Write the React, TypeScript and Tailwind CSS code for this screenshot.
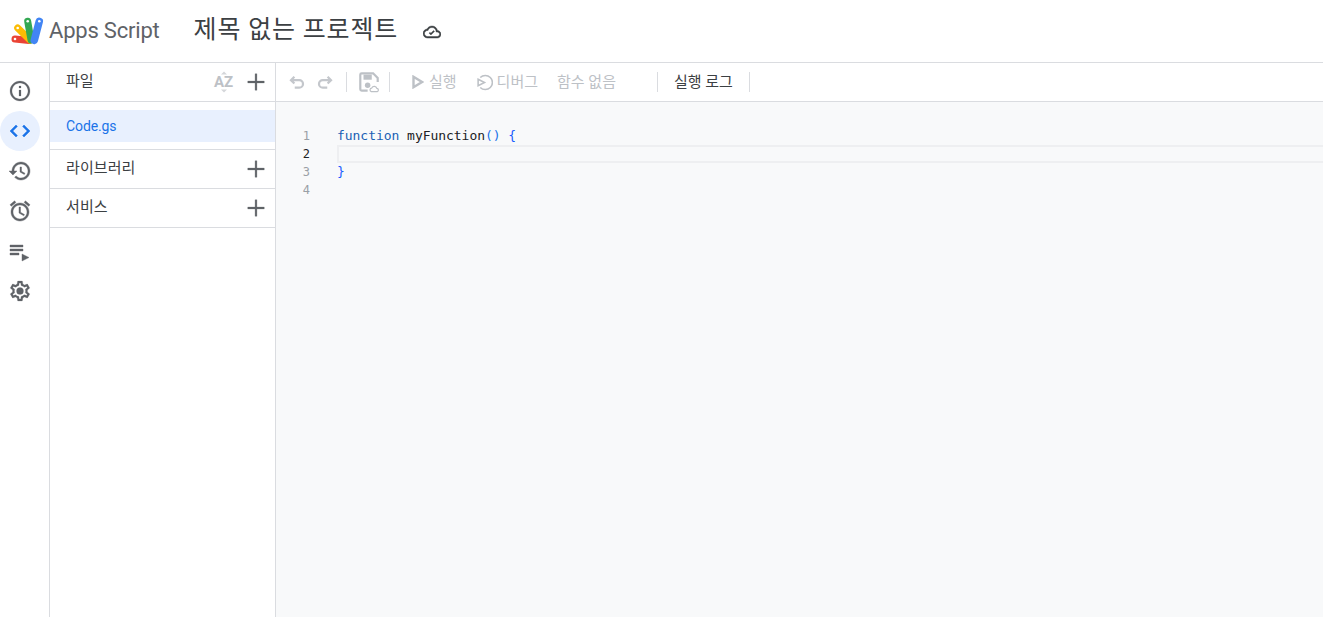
import React from "react";

const P = ({ d, c = "#5f6368", s = 24, w = 0, className = "" }: { d: string; c?: string; s?: number; w?: number; className?: string }) => (
  <svg width={s} height={s} viewBox="0 0 24 24" fill={c} stroke={w ? c : "none"} strokeWidth={w} className={className}><path d={d} /></svg>
);

const Logo = () => (
  <svg width="36" height="32" viewBox="0 0 36 32">
    <g strokeLinecap="round" fill="none">
      <path d="M5 25 L19 26.5" stroke="#ea4335" strokeWidth="7" />
      <path d="M7.7 14 L20 26" stroke="#fbbc04" strokeWidth="7" />
      <path d="M17.7 7.3 L21 26" stroke="#34a853" strokeWidth="7" />
      <path d="M29.3 7.3 L24.3 26.3" stroke="#4285f4" strokeWidth="7.5" />
    </g>
    <circle cx="29.3" cy="7.3" r="1.3" fill="#fff" />
    <circle cx="17.7" cy="7.3" r="1.3" fill="#fff" />
    <circle cx="7.7" cy="14" r="1.3" fill="#fff" />
    <circle cx="5" cy="25" r="1.3" fill="#fff" />
  </svg>
);

const paths = {
  info: "M11 7h2v2h-2zm0 4h2v6h-2zm1-9C6.48 2 2 6.48 2 12s4.48 10 10 10 10-4.48 10-10S17.52 2 12 2zm0 18c-4.41 0-8-3.59-8-8s3.59-8 8-8 8 3.59 8 8-3.59 8-8 8z",
  code: "M9.4 16.6L4.8 12l4.6-4.6L8 6l-6 6 6 6 1.4-1.4zm5.2 0l4.6-4.6-4.6-4.6L16 6l6 6-6 6-1.4-1.4z",
  history: "M13 3c-4.97 0-9 4.03-9 9H1l3.89 3.89.07.14L9 12H6c0-3.87 3.13-7 7-7s7 3.13 7 7-3.13 7-7 7c-1.93 0-3.68-.79-4.94-2.06l-1.42 1.42C8.27 19.99 10.51 21 13 21c4.97 0 9-4.03 9-9s-4.03-9-9-9zm-1 5v5l4.28 2.54.72-1.21-3.5-2.08V8H12z",
  alarm: "M22 5.72l-4.6-3.86-1.29 1.53 4.6 3.86L22 5.72zM7.88 3.39L6.6 1.86 2 5.71l1.29 1.53 4.59-3.85zM12.5 8H11v6l4.75 2.85.75-1.23-4-2.37V8zM12 4c-4.97 0-9 4.03-9 9s4.03 9 9 9 9-4.03 9-9-4.03-9-9-9zm0 16c-3.87 0-7-3.13-7-7s3.13-7 7-7 7 3.13 7 7-3.13 7-7 7z",
  list: "M2 6h13v2H2zm0 4h13v2H2zm0 4h9v2H2zm12 1v7l7-3.5z",
  gear: "M19.43 12.98c.04-.32.07-.64.07-.98 0-.34-.03-.66-.07-.98l2.11-1.65c.19-.15.24-.42.12-.64l-2-3.46c-.09-.16-.26-.25-.44-.25-.06 0-.12.01-.17.03l-2.49 1c-.52-.4-1.08-.73-1.69-.98l-.38-2.65C14.46 2.18 14.25 2 14 2h-4c-.25 0-.46.18-.49.42l-.38 2.65c-.61.25-1.17.59-1.69.98l-2.49-1c-.06-.02-.12-.03-.18-.03-.17 0-.34.09-.43.25l-2 3.46c-.13.22-.07.49.12.64l2.11 1.65c-.04.32-.07.65-.07.98 0 .33.03.66.07.98l-2.11 1.65c-.19.15-.24.42-.12.64l2 3.46c.09.16.26.25.44.25.06 0 .12-.01.17-.03l2.49-1c.52.4 1.08.73 1.69.98l.38 2.65c.03.24.24.42.49.42h4c.25 0 .46-.18.49-.42l.38-2.65c.61-.25 1.17-.59 1.69-.98l2.49 1c.06.02.12.03.18.03.17 0 .34-.09.43-.25l2-3.46c.12-.22.07-.49-.12-.64l-2.11-1.65zm-1.98-1.71c.04.31.05.52.05.73 0 .21-.02.43-.05.73l-.14 1.13.89.7 1.08.84-.7 1.21-1.27-.51-1.04-.42-.9.68c-.43.32-.84.56-1.25.73l-1.06.43-.16 1.13-.2 1.35h-1.4l-.19-1.35-.16-1.13-1.06-.43c-.43-.18-.83-.41-1.23-.71l-.91-.7-1.06.43-1.27.51-.7-1.21 1.08-.84.89-.7-.14-1.13c-.03-.31-.05-.54-.05-.74s.02-.43.05-.73l.14-1.13-.89-.7-1.08-.84.7-1.21 1.27.51 1.04.42.9-.68c.43-.32.84-.56 1.25-.73l1.06-.43.16-1.13.2-1.35h1.39l.19 1.35.16 1.13 1.06.43c.43.18.83.41 1.23.71l.91.7 1.06-.43 1.27-.51.7 1.21-1.07.85-.89.7.14 1.13zM12 8.5a3.5 3.5 0 1 0 0 7 3.5 3.5 0 0 0 0-7z",
};

const Plus = () => <P d="M21 13h-8v8h-2v-8H3v-2h8V3h2v8h8v2z" c="#5f6368" s={22} w={0.3} />;

const Undo = ({ flip = false }: { flip?: boolean }) => (
  <svg width="18" height="18" viewBox="0 0 24 24" fill="none" stroke="#c4c7cc" strokeWidth="3" className={flip ? "-scale-x-100" : ""}>
    <path d="M8.5 5 L4 9.5 L8.5 14 M4 9.5 H15 a5 5 0 0 1 0 10 H9" />
  </svg>
);

const Sep = () => <div className="w-px h-5 bg-[#dadce0]" />;

const RailIcon = ({ d, active = false, w = 0.4 }: { d: string; active?: boolean; w?: number }) => (
  <div className={`w-10 h-10 rounded-full flex items-center justify-center ${active ? "bg-[#e8f0fe]" : ""}`}>
    <P d={d} c={active ? "#1a73e8" : "#5f6368"} s={24} w={w} className="mr-[1px]" />
  </div>
);

const Section = ({ label }: { label: string }) => (
  <div className="h-[39px] border-b border-[#dadce0] flex items-center justify-between pl-4 pr-[8px] shrink-0">
    <span className="text-[15px] tracking-[0.1px] text-[#3c4043] pb-[1px]">{label}</span>
    <Plus />
  </div>
);

const kr = "font-['Roboto','Noto_Sans_CJK_KR',sans-serif]";

export default function App() {
  return (
    <div className={`w-[1323px] h-[617px] overflow-hidden bg-white flex flex-col ${kr}`}>
      <header className="h-[63px] shrink-0 border-b border-[#dadce0] flex items-center">
        <div className="ml-[10px] mt-[-2px] flex items-center">
          <Logo />
        </div>
        <span className="ml-[3px] text-[22px] tracking-[-0.2px] text-[#5f6368] leading-none">Apps Script</span>
        <span className="ml-[34px] text-[25px] tracking-[0.8px] text-[#3c4043] leading-none mt-[-4px]">제목 없는 프로젝트</span>
        <svg width="18" height="18" viewBox="0 0 24 24" fill="#3c4043" stroke="#3c4043" strokeWidth="0.6" className="ml-[25px] mt-[1px]">
          <path d="M19.35 10.04C18.67 6.59 15.64 4 12 4 9.11 4 6.6 5.64 5.35 8.04 2.34 8.36 0 10.91 0 14c0 3.31 2.69 6 6 6h13c2.76 0 5-2.24 5-5 0-2.64-2.05-4.78-4.65-4.96zM19 18H6c-2.21 0-4-1.79-4-4s1.79-4 4-4h.71C7.37 7.69 9.48 6 12 6c3.04 0 5.5 2.46 5.5 5.5v.5H19c1.66 0 3 1.34 3 3s-1.34 3-3 3z" />
          <path d="M10.5 16l-2.4-2.4 1.2-1.2 1.2 1.2 3.6-3.6 1.2 1.2z" />
        </svg>
      </header>
      <div className="flex-1 flex min-h-0">
        <nav className="w-[50px] shrink-0 border-r border-[#dadce0] flex flex-col pt-[8px]">
          <RailIcon d={paths.info} w={0.2} />
          <RailIcon d={paths.code} active w={0.5} />
          <RailIcon d={paths.history} />
          <RailIcon d={paths.alarm} />
          <RailIcon d={paths.list} />
          <RailIcon d={paths.gear} w={0.2} />
        </nav>
        <aside className="w-[226px] shrink-0 border-r border-[#dadce0] flex flex-col">
          <div className="h-[39px] border-b border-[#dadce0] flex items-center pl-4 pr-[8px] shrink-0">
            <span className="text-[15px] text-[#3c4043] pb-[1px] flex-1">파일</span>
            <svg width="22" height="22" viewBox="0 0 22 22" className="mr-[10px]">
              <path d="M11 0.5 L14 3.5 H8z M11 21.5 L8 18.5 H14z" fill="#d5d7da" />
              <text x="1" y="16" fontSize="15" fontWeight="700" fill="#bdc1c6" fontFamily="Roboto, sans-serif">AZ</text>
            </svg>
            <Plus />
          </div>
          <div className="h-[48px] shrink-0 border-b border-[#dadce0] flex items-center">
            <div className="w-full h-8 bg-[#e8f0fe] flex items-center pl-4 pt-[1px] text-[14px] tracking-[-0.1px] text-[#1a73e8]">Code.gs</div>
          </div>
          <Section label="라이브러리" />
          <Section label="서비스" />
        </aside>
        <main className="flex-1 flex flex-col min-w-0 bg-[#f8f9fa]">
          <div className="h-[39px] shrink-0 bg-white border-b border-[#dadce0] flex items-center text-[15px] text-[#bdc1c6]">
            <div className="ml-[12px] flex items-center gap-[10px]"><Undo /><Undo flip /></div>
            <div className="ml-[12px]"><Sep /></div>
            <svg width="22" height="22" viewBox="0 0 24 24" fill="none" className="ml-[11px]">
              <path d="M10.5 21.5H4a1.5 1.5 0 0 1-1.5-1.5V4A1.5 1.5 0 0 1 4 2.5h12.5l5 5V12" stroke="#bdc1c6" strokeWidth="2.4" />
              <path d="M6 4h9v5.5H6z" fill="#bdc1c6" />
              <circle cx="10.5" cy="15.5" r="3" fill="#bdc1c6" />
              <path d="M14.5 22.5a2 2 0 0 1 .5-3.9 3 3 0 0 1 5.6.4 1.8 1.8 0 0 1 .4 3.5z" stroke="#bdc1c6" strokeWidth="1.3" />
            </svg>
            <div className="ml-[9px]"><Sep /></div>
            <svg width="12" height="14" viewBox="0 0 12 14" className="ml-[22px]"><path d="M1.5 1.8 L10 7 L1.5 12.2z" fill="none" stroke="#bdc1c6" strokeWidth="2.4" /></svg>
            <span className="ml-[5px]">실행</span>
            <svg width="17" height="17" viewBox="0 0 24 24" fill="none" stroke="#bdc1c6" strokeWidth="2.2" className="ml-[19px]">
              <path d="M6 5a10 10 0 1 1 0 14" />
              <path d="M3 7.5 L12 12 L3 16.5z" />
            </svg>
            <span className="ml-[4px]">디버그</span>
            <span className="ml-[19px]">함수 없음</span>
            <div className="ml-[41px]"><Sep /></div>
            <span className="ml-[16px] text-[#3c4043]">실행 로그</span>
            <div className="ml-[16px]"><Sep /></div>
          </div>
          <div className="flex-1 pt-[25px] font-['DejaVu_Sans_Mono',monospace] text-[13px] leading-[18px]">
            <CodeLine n={1}><span className="text-[#1a5fb4]">function</span> <span className="text-[#202124]">myFunction</span><span className="text-[#1a73e8]">()</span> <span className="text-[#1a5cff]">{"{"}</span></CodeLine>
            <CodeLine n={2} current />
            <CodeLine n={3}><span className="text-[#1a5cff]">{"}"}</span></CodeLine>
            <CodeLine n={4} />
          </div>
        </main>
      </div>
    </div>
  );
}

function CodeLine({ n, current = false, children }: { n: number; current?: boolean; children?: React.ReactNode }) {
  return (
    <div className="flex h-[18px]">
      <span className={`w-[34px] text-right text-[12px] ${current ? "text-[#202124]" : "text-[#9aa0a6]"}`}>{n}</span>
      <div className={`ml-[27px] flex-1 whitespace-pre tracking-[-0.04px] ${current ? "border-y-2 border-l-2 border-[#eeeff1]" : ""}`}>{children}</div>
    </div>
  );
}
